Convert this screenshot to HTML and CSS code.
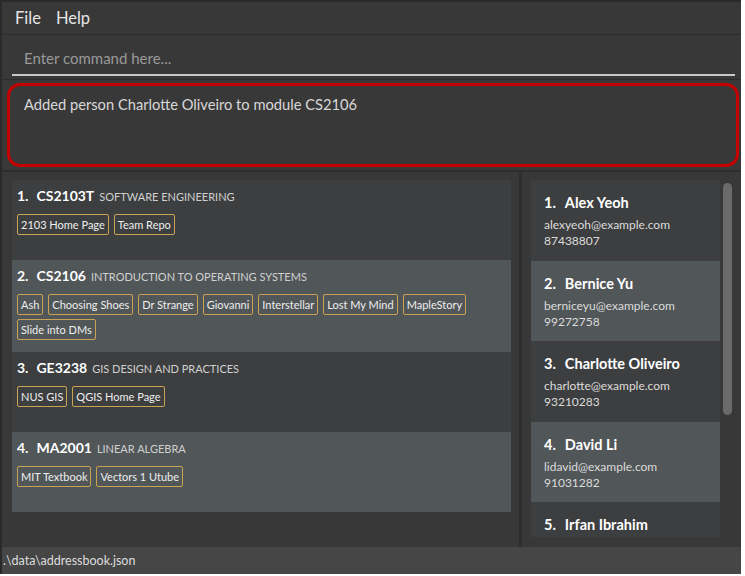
FILE: index.html
```html
<!DOCTYPE html>
<html>
<head>
<meta charset="utf-8">
<link rel="stylesheet" href="styles.css">
</head>
<body>
<div class="window">
  <div class="menubar"><span class="menu">File</span><span class="menu">Help</span></div>
  <div class="command"><div class="cmd-input">Enter command here...</div></div>
  <div class="result"><div class="result-box">Added person Charlotte Oliveiro to module CS2106</div></div>
  <div class="main">
    <div class="modules-pane">
      <div class="module-list">
        <div class="module odd">
          <div class="mod-head"><span class="idx">1.</span><span class="code">CS2103T</span><span class="title">SOFTWARE ENGINEERING</span></div>
          <div class="tags"><span class="tag">2103 Home Page</span><span class="tag">Team Repo</span></div>
        </div>
        <div class="module even">
          <div class="mod-head"><span class="idx">2.</span><span class="code">CS2106</span><span class="title">INTRODUCTION TO OPERATING SYSTEMS</span></div>
          <div class="tags"><span class="tag">Ash</span><span class="tag">Choosing Shoes</span><span class="tag">Dr Strange</span><span class="tag">Giovanni</span><span class="tag">Interstellar</span><span class="tag">Lost My Mind</span><span class="tag">MapleStory</span><span class="tag">Slide into DMs</span></div>
        </div>
        <div class="module odd">
          <div class="mod-head"><span class="idx">3.</span><span class="code">GE3238</span><span class="title">GIS DESIGN AND PRACTICES</span></div>
          <div class="tags"><span class="tag">NUS GIS</span><span class="tag">QGIS Home Page</span></div>
        </div>
        <div class="module even">
          <div class="mod-head"><span class="idx">4.</span><span class="code">MA2001</span><span class="title">LINEAR ALGEBRA</span></div>
          <div class="tags"><span class="tag">MIT Textbook</span><span class="tag">Vectors 1 Utube</span></div>
        </div>
      </div>
    </div>
    <div class="persons-pane">
      <div class="person-list">
        <div class="person odd"><div class="pname"><span class="pidx">1.</span>Alex Yeoh</div><div class="pinfo">alexyeoh@example.com</div><div class="pinfo">87438807</div></div>
        <div class="person even"><div class="pname"><span class="pidx">2.</span>Bernice Yu</div><div class="pinfo">berniceyu@example.com</div><div class="pinfo">99272758</div></div>
        <div class="person odd"><div class="pname"><span class="pidx">3.</span>Charlotte Oliveiro</div><div class="pinfo">charlotte@example.com</div><div class="pinfo">93210283</div></div>
        <div class="person even"><div class="pname"><span class="pidx">4.</span>David Li</div><div class="pinfo">lidavid@example.com</div><div class="pinfo">91031282</div></div>
        <div class="person odd"><div class="pname"><span class="pidx">5.</span>Irfan Ibrahim</div></div>
      </div>
      <div class="scroll-track"><div class="scroll-thumb"></div></div>
    </div>
  </div>
  <div class="status">.\data\addressbook.json</div>
</div>
</body>
</html>
```

FILE: styles.css
```css
html, body {
  margin: 0;
  padding: 0;
  background: #ffffff;
}
body {
  width: 745px;
  height: 576px;
  overflow: hidden;
  font-family: "Lato", "Open Sans", sans-serif;
}
.window {
  width: 739px;
  height: 572px;
  background: #383838;
  border-left: 2px solid #2a2a2a;
  border-top: 2px solid #2a2a2a;
  display: flex;
  flex-direction: column;
}
.menubar {
  height: 32px;
  border-bottom: 1px solid #2c2c2c;
  display: flex;
  align-items: center;
  padding-left: 13px;
  gap: 15px;
  flex: none;
}
.menu {
  color: #e6e6e6;
  font-size: 16.5px;
}
.command {
  height: 45px;
  border-bottom: 1px solid #2c2c2c;
  padding: 7px 6px 0 10px;
  box-sizing: border-box;
  flex: none;
}
.cmd-input {
  height: 34px;
  border-bottom: 2px solid #c8c8c8;
  color: #9a9a9a;
  font-size: 15px;
  display: flex;
  align-items: center;
  padding-left: 12px;
  box-sizing: border-box;
}
.result {
  height: 92px;
  padding: 3px 2px 3px 5px;
  box-sizing: border-box;
  border-bottom: 2px solid #2e2e2e;
  flex: none;
}
.result-box {
  height: 100%;
  box-sizing: border-box;
  border: 3px solid #c40000;
  border-radius: 13px;
  padding: 9px 14px;
  color: #d8d8d8;
  font-size: 14.7px;
}
.main {
  flex: 1;
  display: flex;
  min-height: 0;
}
.modules-pane {
  width: 520px;
  border-right: 3px solid #2e2e2e;
  padding: 8px 8px 0 10px;
  box-sizing: border-box;
  flex: none;
}
.module-list {
  display: flex;
  flex-direction: column;
}
.module {
  min-height: 80px;
  padding: 7px 6px 12px 5px;
  box-sizing: border-box;
}
.odd { background: #3c3e3f; }
.even { background: #515658; }
.mod-head {
  display: flex;
  align-items: baseline;
  height: 20px;
  white-space: nowrap;
}
.idx {
  color: #ffffff;
  font-weight: bold;
  font-size: 14px;
  margin-right: 8px;
}
.code {
  color: #ffffff;
  font-weight: bold;
  font-size: 14px;
  margin-right: 5px;
}
.title {
  color: #d0d0d0;
  font-size: 11px;
}
.tags {
  display: flex;
  flex-wrap: wrap;
  gap: 4px 5px;
  margin-top: 7px;
}
.tag {
  border: 1px solid #c9a253;
  border-radius: 2px;
  color: #eeeeee;
  font-size: 11px;
  height: 21px;
  box-sizing: border-box;
  padding: 0 3px;
  display: flex;
  align-items: center;
}
.persons-pane {
  flex: 1;
  display: flex;
  padding: 8px 0 0 9px;
  box-sizing: border-box;
  min-width: 0;
}
.person-list {
  width: 189px;
  height: 357px;
  overflow: hidden;
  flex: none;
  display: flex;
  flex-direction: column;
}
.person {
  height: 80.5px;
  flex: none;
  padding: 14px 6px 0 13px;
  box-sizing: border-box;
}
.pname {
  color: #ffffff;
  font-weight: bold;
  font-size: 14.5px;
  height: 23px;
  white-space: nowrap;
}
.pidx {
  margin-right: 9px;
}
.pinfo {
  color: #dcdcdc;
  font-size: 12px;
  line-height: 16px;
}
.scroll-track {
  width: 15px;
  padding: 3px 0 0 3px;
  box-sizing: border-box;
}
.scroll-thumb {
  width: 9px;
  height: 232px;
  border-radius: 5px;
  background: #6a6a6a;
}
.status {
  height: 27px;
  background: #464646;
  color: #dcdcdc;
  font-size: 12.5px;
  display: flex;
  align-items: center;
  padding-left: 1px;
  flex: none;
}
```
